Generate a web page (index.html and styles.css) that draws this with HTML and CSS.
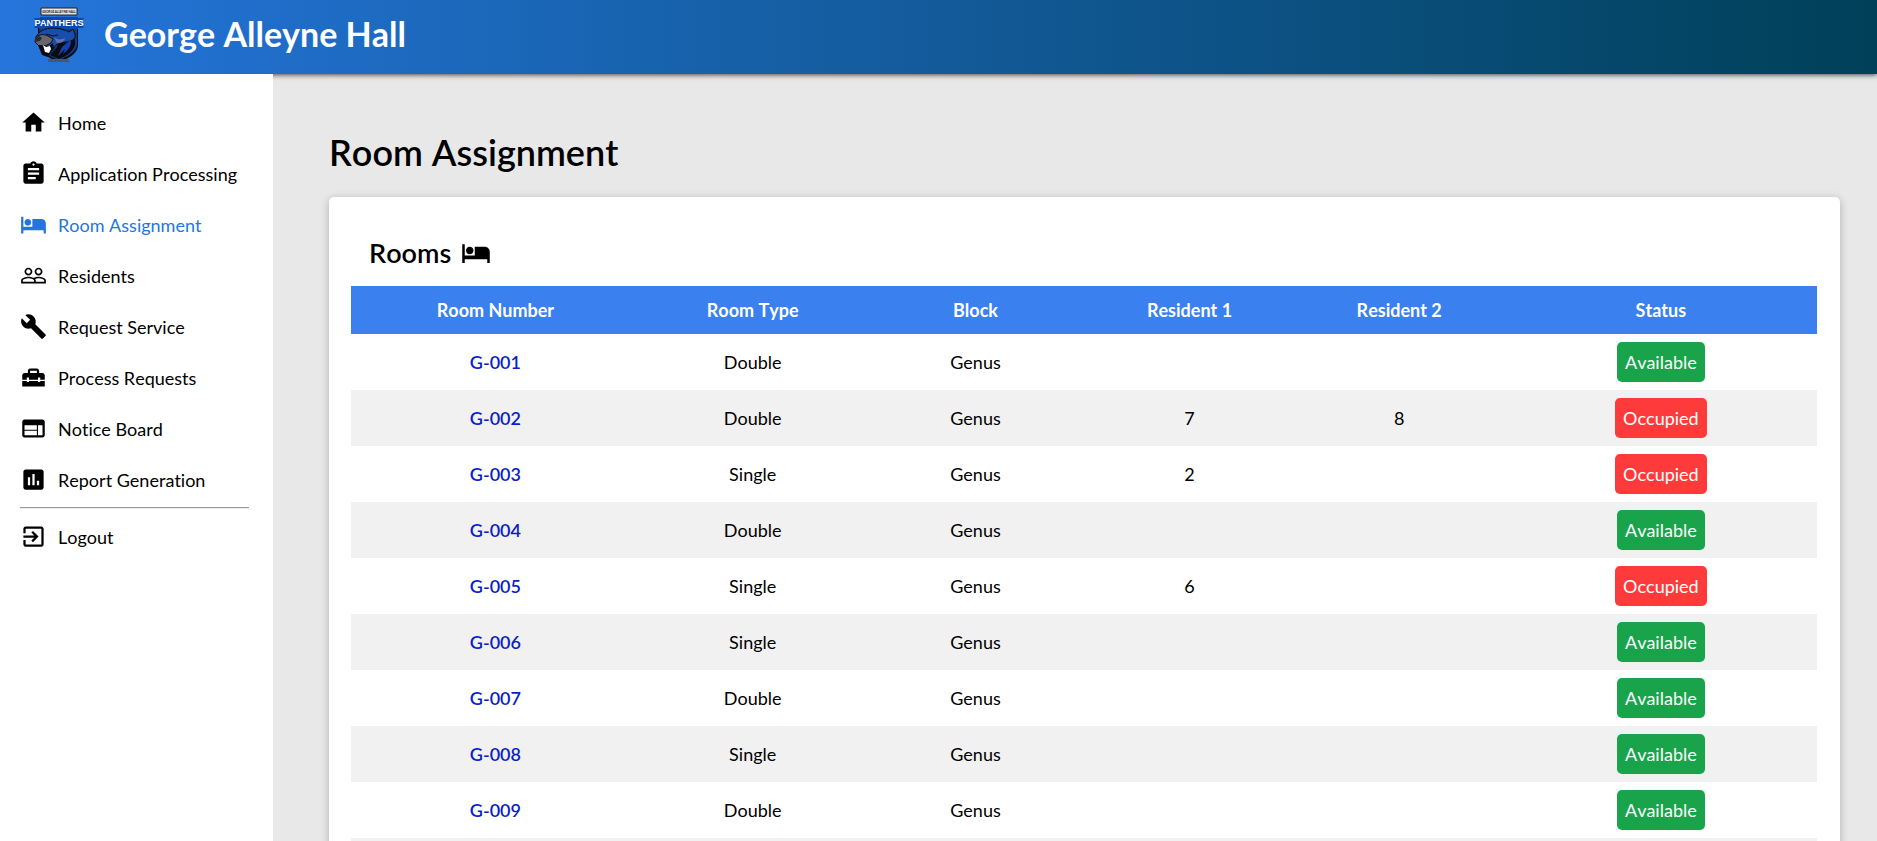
FILE: index.html
```html
<!DOCTYPE html>
<html lang="en">
<head>
<meta charset="utf-8">
<title>George Alleyne Hall</title>
<link rel="stylesheet" href="styles.css">
</head>
<body>
<svg class="sprite" aria-hidden="true">
  <symbol id="bed" viewBox="0 0 24 24"><path d="M7 13c1.66 0 3-1.34 3-3S8.66 7 7 7s-3 1.34-3 3 1.34 3 3 3zm12-6h-8v7H3V5H1v15h2v-3h18v3h2v-9c0-2.21-1.79-4-4-4z"/></symbol>
</svg>
<header class="topbar">
  <svg class="logo" viewBox="0 0 54 56" role="img" aria-label="Panthers crest">
    <path class="crest-edge" d="M6 18h40v20c0 8-8 13-19 17C15 51 7 45 6 36z"/>
    <path class="crest-fill" d="M7 19h38v18c0 7-8 12-18 16C16 49 9 44 8 36z"/>
    <path class="crest-edge" d="M27 32l14-6 2 3v9c-2 6-8 11-16 14l-9-4 7-8z"/>
    <path class="ribbon" d="M2 11h6v-1h38v1h6l-3 5 3 5h-6v1H8v-1H2l3-5z"/>
    <path class="face" d="M4 30c3-6 9-9 17-9 7 0 12 2 16 4l4-3 2 5c1 5-2 6-5 7-5 2-10 1-14 4l-4 6-7 2-5-5z"/>
    <path class="shade" d="M22 30c3 3 7 3 11 1-1 4-4 5-8 5z"/>
    <path class="brow" d="M14 27l7 2 5-1"/>
    <path class="muzzle" d="M4 30c4-3 8-3 12-1l5 3-2 4-6 3H7l-4-4z"/>
    <path class="nose" d="M3 31l4-2 3 2-2 3-5 1z"/>
    <path class="crest-edge" d="M6 38l11 1 4-3 1 5-6 9-6-2z"/>
    <path class="tooth" d="M11 38l3 2 4-1 1 3-2 4-4-1z"/>
    <path class="streak" d="M38 33l1 1c0 6-3 9-8 13l2-5-7 7 4-9z"/>
    <path class="banner" d="M9 1h36v7H9z"/>
    <path class="plate" d="M16 52h21v3H16z"/>
    <text class="crest-top" x="27" y="6">GEORGE ALLEYNE HALL</text>
    <text class="crest-name" x="27" y="19">PANTHERS</text>
  </svg>
  <span class="brand">George Alleyne Hall</span>
</header>
<div class="shell">
  <nav class="sidebar">
    <a class="item" href="#"><svg class="icon" viewBox="0 0 24 24"><path d="M10 20v-6h4v6h5v-8h3L12 3 2 12h3v8z"/></svg>Home</a>
    <a class="item" href="#"><svg class="icon" viewBox="0 0 24 24"><path d="M19 3h-4.18C14.4 1.84 13.3 1 12 1s-2.4.84-2.82 2H5c-1.1 0-2 .9-2 2v14c0 1.1.9 2 2 2h14c1.1 0 2-.9 2-2V5c0-1.1-.9-2-2-2zm-7 0c.55 0 1 .45 1 1s-.45 1-1 1-1-.45-1-1 .45-1 1-1zm2 14H7v-2h7v2zm3-4H7v-2h10v2zm0-4H7V7h10v2z"/></svg>Application Processing</a>
    <a class="item active" href="#" aria-current="page"><svg class="icon"><use href="#bed"/></svg>Room Assignment</a>
    <a class="item" href="#"><svg class="icon" viewBox="0 0 24 24"><path d="M16.5 13c-1.2 0-3.07.34-4.5 1-1.43-.67-3.3-1-4.5-1C5.33 13 1 14.08 1 16.25V19h22v-2.75c0-2.17-4.33-3.25-6.5-3.25zm-4 4.5h-10v-1.25c0-.54 2.56-1.75 5-1.75s5 1.21 5 1.75v1.25zm9 0H14v-1.25c0-.46-.2-.86-.52-1.22.88-.3 1.96-.53 3.02-.53 2.44 0 5 1.21 5 1.75v1.25zM7.5 12c1.93 0 3.5-1.57 3.5-3.5S9.43 5 7.5 5 4 6.57 4 8.5 5.57 12 7.5 12zm0-5.5c1.1 0 2 .9 2 2s-.9 2-2 2-2-.9-2-2 .9-2 2-2zm9 5.5c1.93 0 3.5-1.57 3.5-3.5S18.43 5 16.5 5 13 6.57 13 8.5s1.57 3.5 3.5 3.5zm0-5.5c1.1 0 2 .9 2 2s-.9 2-2 2-2-.9-2-2 .9-2 2-2z"/></svg>Residents</a>
    <a class="item" href="#"><svg class="icon" viewBox="0 0 24 24"><path d="M22.7 19l-9.1-9.1c.9-2.3.4-5-1.5-6.9-2-2-5-2.4-7.4-1.3L9 6 6 9 1.6 4.7C.4 7.1.9 10.1 2.9 12.1c1.9 1.9 4.6 2.4 6.9 1.5l9.1 9.1c.4.4 1 .4 1.4 0l2.3-2.3c.5-.4.5-1.1.1-1.4z"/></svg>Request Service</a>
    <a class="item" href="#"><svg class="icon" viewBox="0 0 24 24"><path d="M18 16h-2v-1H8v1H6v-1H2v5h20v-5h-4v1zM20 8h-3V6c0-1.1-.9-2-2-2H9c-1.1 0-2 .9-2 2v2H4c-1.1 0-2 .9-2 2v4h4v-2h2v2h8v-2h2v2h4v-4c0-1.1-.9-2-2-2zm-5 0H9V6h6v2z"/></svg>Process Requests</a>
    <a class="item" href="#"><svg class="icon" viewBox="0 0 24 24"><path d="M20 4H4c-1.1 0-1.99.9-1.99 2L2 18c0 1.1.9 2 2 2h16c1.1 0 2-.9 2-2V6c0-1.1-.9-2-2-2zm-5 14H4v-4h11v4zm0-5H4V9h11v4zm5 5h-4V9h4v9z"/></svg>Notice Board</a>
    <a class="item" href="#"><svg class="icon" viewBox="0 0 24 24"><path d="M19 3H5c-1.1 0-2 .9-2 2v14c0 1.1.9 2 2 2h14c1.1 0 2-.9 2-2V5c0-1.1-.9-2-2-2zM9 17H7v-7h2v7zm4 0h-2V7h2v10zm4 0h-2v-4h2v4z"/></svg>Report Generation</a>
    <hr class="divider">
    <a class="item" href="#"><svg class="icon" viewBox="0 0 24 24"><path d="M10.09 15.59L11.5 17l5-5-5-5-1.41 1.41L12.67 11H3v2h9.67l-2.58 2.59zM19 3H5c-1.11 0-2 .9-2 2v4h2V5h14v14H5v-4H3v4c0 1.1.89 2 2 2h14c1.1 0 2-.9 2-2V5c0-1.1-.9-2-2-2z"/></svg>Logout</a>
  </nav>
  <main class="content">
    <h1 class="title">Room Assignment</h1>
    <section class="card">
      <h2 class="subtitle">Rooms <svg class="subicon"><use href="#bed"/></svg></h2>
      <table class="rooms">
        <colgroup><col class="c-number"><col class="c-type"><col class="c-block"><col class="c-first"><col class="c-second"><col class="c-status"></colgroup>
        <thead>
          <tr><th>Room Number</th><th>Room Type</th><th>Block</th><th>Resident 1</th><th>Resident 2</th><th>Status</th></tr>
        </thead>
        <tbody>
          <tr><td><a class="room" href="#">G-001</a></td><td>Double</td><td>Genus</td><td></td><td></td><td><span class="badge free">Available</span></td></tr>
          <tr><td><a class="room" href="#">G-002</a></td><td>Double</td><td>Genus</td><td>7</td><td>8</td><td><span class="badge taken">Occupied</span></td></tr>
          <tr><td><a class="room" href="#">G-003</a></td><td>Single</td><td>Genus</td><td>2</td><td></td><td><span class="badge taken">Occupied</span></td></tr>
          <tr><td><a class="room" href="#">G-004</a></td><td>Double</td><td>Genus</td><td></td><td></td><td><span class="badge free">Available</span></td></tr>
          <tr><td><a class="room" href="#">G-005</a></td><td>Single</td><td>Genus</td><td>6</td><td></td><td><span class="badge taken">Occupied</span></td></tr>
          <tr><td><a class="room" href="#">G-006</a></td><td>Single</td><td>Genus</td><td></td><td></td><td><span class="badge free">Available</span></td></tr>
          <tr><td><a class="room" href="#">G-007</a></td><td>Double</td><td>Genus</td><td></td><td></td><td><span class="badge free">Available</span></td></tr>
          <tr><td><a class="room" href="#">G-008</a></td><td>Single</td><td>Genus</td><td></td><td></td><td><span class="badge free">Available</span></td></tr>
          <tr><td><a class="room" href="#">G-009</a></td><td>Double</td><td>Genus</td><td></td><td></td><td><span class="badge free">Available</span></td></tr>
          <tr><td></td><td></td><td></td><td></td><td></td><td></td></tr>
        </tbody>
      </table>
    </section>
  </main>
</div>
</body>
</html>
```

FILE: styles.css
```css
* { box-sizing: border-box; }

body {
  margin: 0;
  display: flex;
  flex-direction: column;
  min-height: 100vh;
  background: #e8e8e8;
  color: #000;
  font-family: Lato, "Open Sans", sans-serif;
  font-size: 18px;
  font-kerning: none;
  font-variant-ligatures: none;
  line-height: 24px;
}

.sprite { display: none; }

.topbar {
  display: flex;
  align-items: flex-start;
  gap: 18px;
  height: 74px;
  padding: 7px 32px 0;
  background: linear-gradient(to right, #2575dc, #004058);
  box-shadow: 0 1px 5px rgba(0, 0, 0, 0.7);
}

.logo { width: 54px; height: 56px; }
.brand { padding-top: 6px; color: #fff; font-size: 34px; font-weight: 700; line-height: 42px; }

.crest-edge { fill: #0a0c14; }
.crest-fill { fill: #163a86; }
.ribbon { fill: #0d49a8; }
.face { fill: #1a4cae; stroke: #0a0c14; stroke-width: 1; }
.muzzle { fill: #66666c; stroke: #111; stroke-width: 1; }
.nose { fill: #2a2c34; }
.brow { fill: none; stroke: #0a0c14; stroke-width: 1; }
.shade { fill: #62759c; }
.tooth { fill: #fff; }
.streak { fill: #173fb0; }
.banner { fill: #e4e4e8; stroke: #222; stroke-width: 1; }
.plate { fill: #4d5568; }
.crest-top { font: 700 3px Lato, sans-serif; text-anchor: middle; fill: #111; }
.crest-name {
  font: 700 9px "Liberation Sans Narrow", "Liberation Sans", sans-serif;
  text-anchor: middle;
  fill: #fff;
}

.shell { display: flex; flex: 1; }

.sidebar {
  position: relative;
  flex: 0 0 273px;
  padding: 23px 24px 24px 20px;
  background: #fff;
}

.item {
  display: flex;
  align-items: center;
  gap: 11px;
  height: 51px;
  color: #000;
  text-decoration: none;
}

.item.active { color: #2575dc; }
.icon { flex: none; width: 27px; height: 27px; fill: currentColor; }
.divider { margin: 2px 0; border: 0; border-top: 1px solid #999; border-bottom: 1px solid #eee; }

.content { flex: 1; min-width: 0; padding: 56px 37px 0 56px; }
.title { margin: 0 0 23px; font-size: 36px; font-weight: 600; line-height: 44px; }

.card {
  padding: 38px 23px 24px 22px;
  background: #fff;
  border-radius: 5px;
  box-shadow: 0 2px 8px rgba(0, 0, 0, 0.25);
}

.subtitle {
  display: flex;
  align-items: center;
  gap: 10px;
  margin: 0 0 15px;
  padding-left: 18px;
  font-size: 27px;
  font-weight: 600;
  line-height: 36px;
}

.subicon { width: 30px; height: 30px; }

.rooms { width: 100%; border-collapse: collapse; table-layout: fixed; text-align: center; }
.rooms th { height: 48px; padding: 0; background: #3a80ef; color: #fff; font-weight: 700; }
.rooms td { height: 56px; padding: 0; }
.rooms tbody tr:nth-child(even) { background: #f1f1f1; }

.c-number { width: 19.7%; }
.c-type { width: 15.4%; }
.c-block { width: 15%; }
.c-first { width: 14.2%; }
.c-second { width: 14.4%; }
.c-status { width: 21.3%; }

.room { color: #0b1fc4; font-weight: 600; text-decoration: none; }

.badge { display: inline-block; padding: 8px; border-radius: 5px; color: #fff; vertical-align: middle; }
.free { background: #19a44c; }
.taken { background: #ff3a3a; }
```
